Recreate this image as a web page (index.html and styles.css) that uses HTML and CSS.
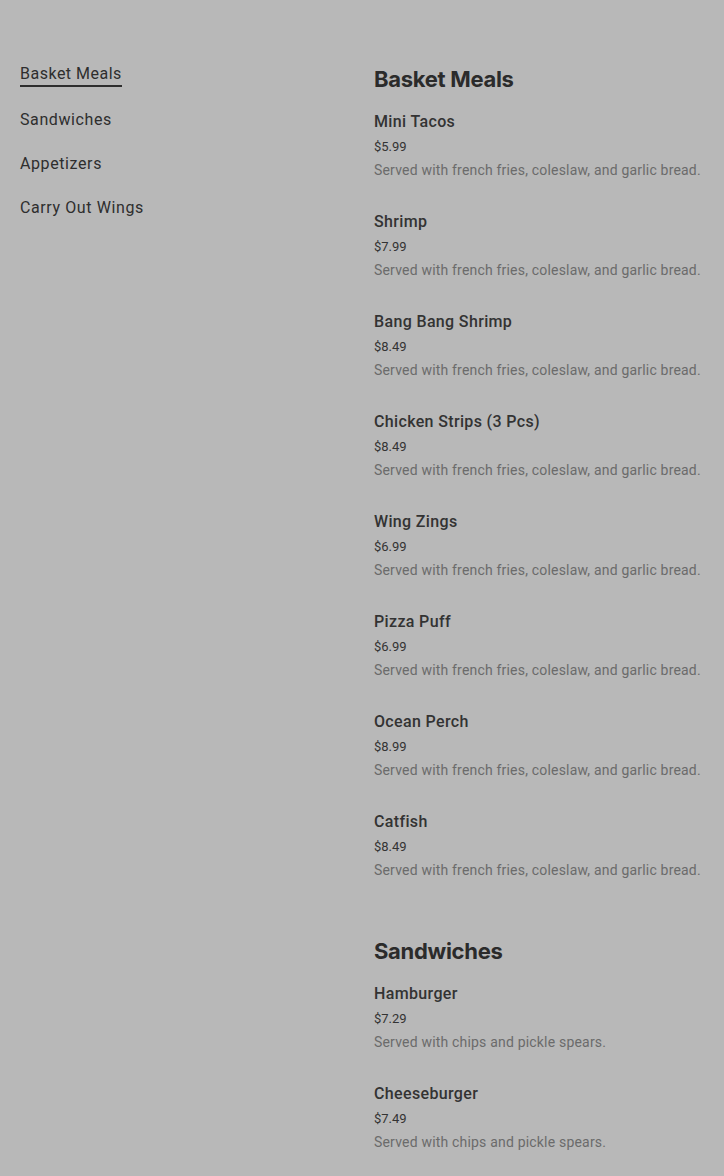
FILE: index.html
```html
<!DOCTYPE html>
<html>
<head>
<meta charset="utf-8">
<link rel="stylesheet" href="styles.css">
</head>
<body>
<div class="page">
  <nav class="nav">
    <a class="nav-item active">Basket Meals</a>
    <a class="nav-item">Sandwiches</a>
    <a class="nav-item">Appetizers</a>
    <a class="nav-item">Carry Out Wings</a>
  </nav>
  <main class="menu">
    <section class="section">
      <h2 class="section-title">Basket Meals</h2>
      <div class="item"><div class="name">Mini Tacos</div><div class="price">$5.99</div><div class="desc">Served with french fries, coleslaw, and garlic bread.</div></div>
      <div class="item"><div class="name">Shrimp</div><div class="price">$7.99</div><div class="desc">Served with french fries, coleslaw, and garlic bread.</div></div>
      <div class="item"><div class="name">Bang Bang Shrimp</div><div class="price">$8.49</div><div class="desc">Served with french fries, coleslaw, and garlic bread.</div></div>
      <div class="item"><div class="name">Chicken Strips (3 Pcs)</div><div class="price">$8.49</div><div class="desc">Served with french fries, coleslaw, and garlic bread.</div></div>
      <div class="item"><div class="name">Wing Zings</div><div class="price">$6.99</div><div class="desc">Served with french fries, coleslaw, and garlic bread.</div></div>
      <div class="item"><div class="name">Pizza Puff</div><div class="price">$6.99</div><div class="desc">Served with french fries, coleslaw, and garlic bread.</div></div>
      <div class="item"><div class="name">Ocean Perch</div><div class="price">$8.99</div><div class="desc">Served with french fries, coleslaw, and garlic bread.</div></div>
      <div class="item"><div class="name">Catfish</div><div class="price">$8.49</div><div class="desc">Served with french fries, coleslaw, and garlic bread.</div></div>
    </section>
    <section class="section">
      <h2 class="section-title">Sandwiches</h2>
      <div class="item"><div class="name">Hamburger</div><div class="price">$7.29</div><div class="desc">Served with chips and pickle spears.</div></div>
      <div class="item"><div class="name">Cheeseburger</div><div class="price">$7.49</div><div class="desc">Served with chips and pickle spears.</div></div>
    </section>
  </main>
</div>
</body>
</html>
```
FILE: styles.css
```css
html, body {
  margin: 0;
  padding: 0;
  background: #b8b8b8;
  overflow: hidden;
}
body {
  font-family: Roboto, "Liberation Sans", sans-serif;
  color: #2b2b2b;
}
.page {
  display: flex;
  padding: 61px 0 0 20px;
}
.nav {
  width: 354px;
  flex: none;
  display: flex;
  flex-direction: column;
  gap: 20px;
  padding-top: 2px;
}
.nav-item {
  align-self: flex-start;
  font-size: 16px;
  line-height: 24px;
  color: #2e2e2e;
  letter-spacing: 0.6px;
}
.nav-item.active {
  line-height: 22px;
  border-bottom: 2px solid #2e2e2e;
  margin-bottom: 1px;
  letter-spacing: 0.5px;
}
.menu {
  flex: 1;
  min-width: 0;
  display: flex;
  flex-direction: column;
  gap: 23px;
}
.section-title {
  margin: 4px 0 17px;
  font-family: Inter, sans-serif;
  font-size: 22px;
  line-height: 28px;
  font-weight: 700;
  letter-spacing: -0.3px;
  color: #2b2b2b;
}
.item {
  margin-bottom: 31px;
}
.name {
  font-size: 16px;
  line-height: 24px;
  font-weight: 500;
  color: #333;
  letter-spacing: 0.35px;
}
.price {
  margin-top: 4px;
  font-size: 13px;
  line-height: 18px;
  color: #333;
}
.desc {
  margin-top: 5px;
  font-size: 14px;
  line-height: 18px;
  color: #6b6b6b;
  white-space: nowrap;
  letter-spacing: 0.19px;
}
```
